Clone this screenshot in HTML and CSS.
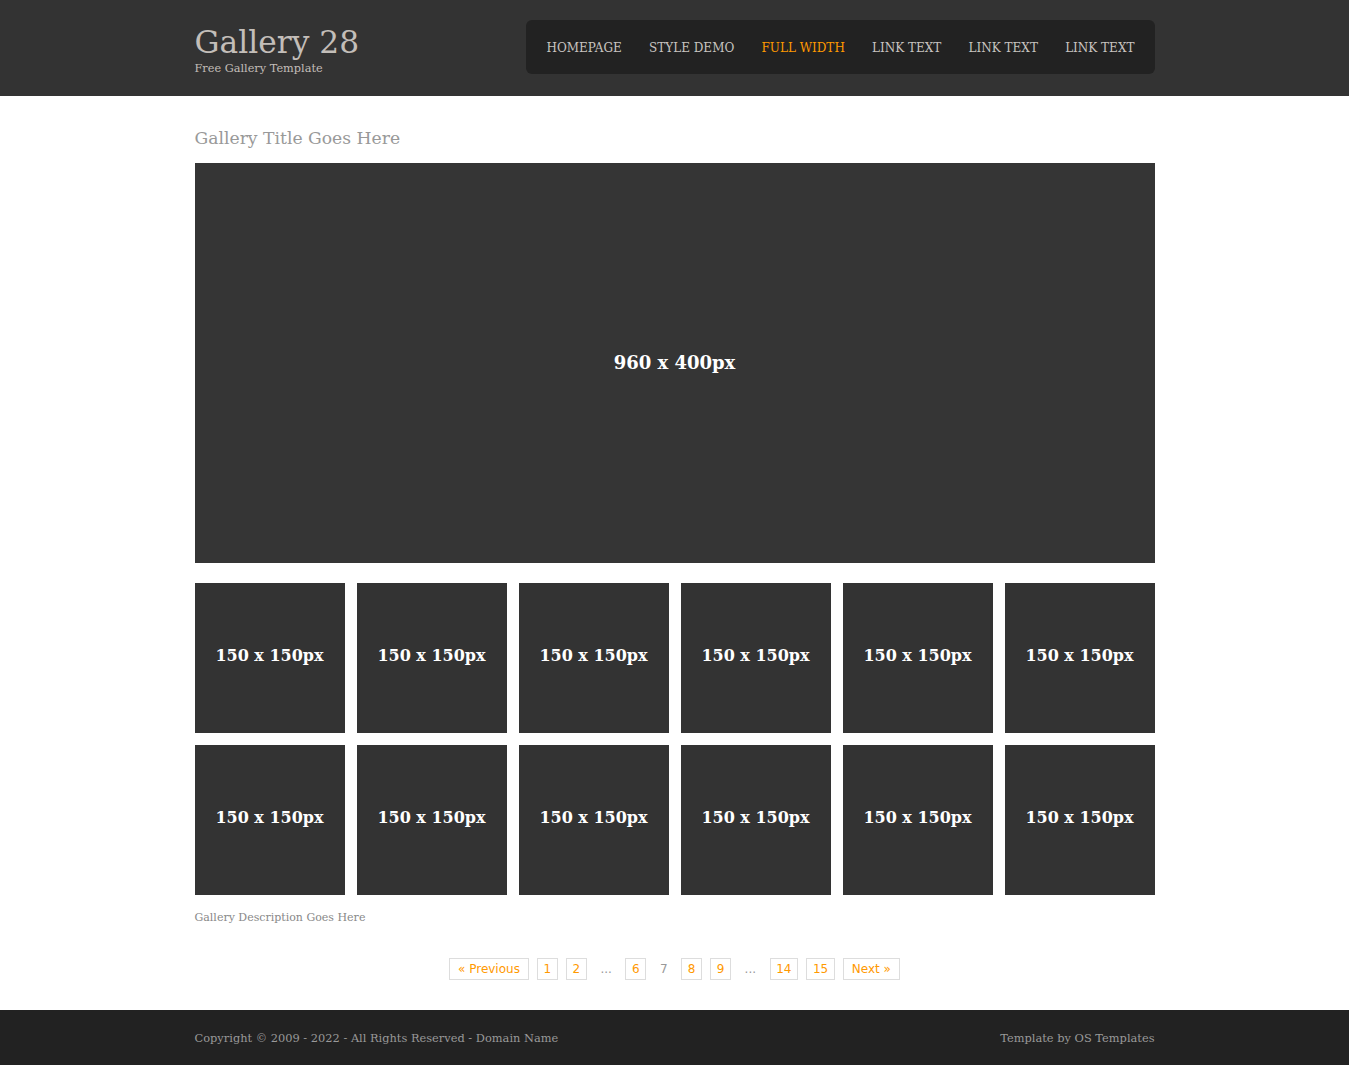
FILE: index.html
```html
<!DOCTYPE html>
<html lang="en">
<head>
<meta charset="utf-8">
<title>Gallery 28</title>
<link rel="stylesheet" href="styles.css">
</head>
<body>
<header class="site-header">
  <div class="wrap header-inner">
    <div class="logo">
      <h1 class="logo-title">Gallery 28</h1>
      <p class="logo-sub">Free Gallery Template</p>
    </div>
    <nav class="topnav">
      <a href="#">HOMEPAGE</a>
      <a href="#">STYLE DEMO</a>
      <a href="#" class="active">FULL WIDTH</a>
      <a href="#">LINK TEXT</a>
      <a href="#">LINK TEXT</a>
      <a href="#">LINK TEXT</a>
    </nav>
  </div>
</header>

<main class="wrap content">
  <h2 class="gallery-title">Gallery Title Goes Here</h2>
  <div class="hero">960 x 400px</div>
  <div class="thumbs">
    <div class="thumb">150 x 150px</div>
    <div class="thumb">150 x 150px</div>
    <div class="thumb">150 x 150px</div>
    <div class="thumb">150 x 150px</div>
    <div class="thumb">150 x 150px</div>
    <div class="thumb">150 x 150px</div>
    <div class="thumb">150 x 150px</div>
    <div class="thumb">150 x 150px</div>
    <div class="thumb">150 x 150px</div>
    <div class="thumb">150 x 150px</div>
    <div class="thumb">150 x 150px</div>
    <div class="thumb">150 x 150px</div>
  </div>
  <p class="gallery-desc">Gallery Description Goes Here</p>
  <div class="pagination">
    <a href="#" class="pg pg-wide">&laquo; Previous</a>
    <a href="#" class="pg">1</a>
    <a href="#" class="pg">2</a>
    <span class="pg-plain">...</span>
    <a href="#" class="pg">6</a>
    <span class="pg-plain">7</span>
    <a href="#" class="pg">8</a>
    <a href="#" class="pg">9</a>
    <span class="pg-plain">...</span>
    <a href="#" class="pg">14</a>
    <a href="#" class="pg">15</a>
    <a href="#" class="pg pg-wide">Next &raquo;</a>
  </div>
</main>

<footer class="site-footer">
  <div class="wrap footer-inner">
    <p>Copyright &copy; 2009 - 2022 - All Rights Reserved - Domain Name</p>
    <p>Template by OS Templates</p>
  </div>
</footer>
</body>
</html>
```

FILE: styles.css
```css
html, body {
  margin: 0;
  padding: 0;
}
body {
  background: #fff;
  font-family: "DejaVu Serif", "Liberation Serif", serif;
  color: #888;
}
.wrap {
  width: 960px;
  margin: 0 auto;
}
.site-header {
  background: #333333;
  height: 96px;
}
.header-inner {
  display: flex;
  justify-content: space-between;
  align-items: flex-start;
  padding-top: 20px;
}
.logo {
  margin-top: 4px;
}
.logo-title {
  margin: 0;
  font-size: 31.3px;
  line-height: 36px;
  font-weight: normal;
  color: #c3beb9;
}
.logo-sub {
  margin: 1px 0 0;
  font-size: 11.3px;
  line-height: 16px;
  color: #c3beb9;
}
.topnav {
  width: 629px;
  height: 54px;
  box-sizing: border-box;
  background: #222222;
  border-radius: 6px;
  display: flex;
  justify-content: space-between;
  align-items: center;
  padding: 2px 20px 0 21px;
}
.topnav a {
  color: #c8c4c0;
  text-decoration: none;
  font-size: 12px;
  line-height: 16px;
}
.topnav a.active {
  color: #ff9900;
}
.content {
  padding-top: 30px;
}
.gallery-title {
  margin: 0 0 13px;
  font-size: 17.2px;
  line-height: 24px;
  font-weight: normal;
  color: #999;
}
.hero {
  height: 400px;
  background: #353535;
  color: #fff;
  display: flex;
  align-items: center;
  justify-content: center;
  font-size: 18px;
  font-weight: bold;
  padding-bottom: 2px;
  box-sizing: border-box;
}
.thumbs {
  margin-top: 20px;
  display: grid;
  grid-template-columns: repeat(6, 150px);
  gap: 12px;
}
.thumb {
  height: 150px;
  box-sizing: border-box;
  padding-bottom: 6px;
  background: #333333;
  color: #fff;
  display: flex;
  align-items: center;
  justify-content: center;
  font-size: 16px;
  font-weight: bold;
}
.gallery-desc {
  margin: 15px 0 0;
  font-size: 11px;
  line-height: 16px;
  color: #888;
}
.pagination {
  margin: 32px 0 30px;
  display: flex;
  justify-content: center;
  align-items: center;
  gap: 8px;
  font-family: "DejaVu Sans", Verdana, sans-serif;
  font-size: 12px;
  line-height: 20px;
}
.pg {
  display: block;
  border: 1px solid #dddddd;
  padding: 0 5.7px;
  color: #ff9900;
  text-decoration: none;
}
.pg-wide {
  padding: 0 8px;
}
.pg-plain {
  display: block;
  padding: 0 5.5px;
  color: #999;
}
.site-footer {
  background: #222222;
}
.footer-inner {
  display: flex;
  justify-content: space-between;
  padding: 20px 0 18px;
}
.footer-inner p {
  margin: 0;
  font-size: 11.4px;
  line-height: 17px;
  color: #999;
}
```
